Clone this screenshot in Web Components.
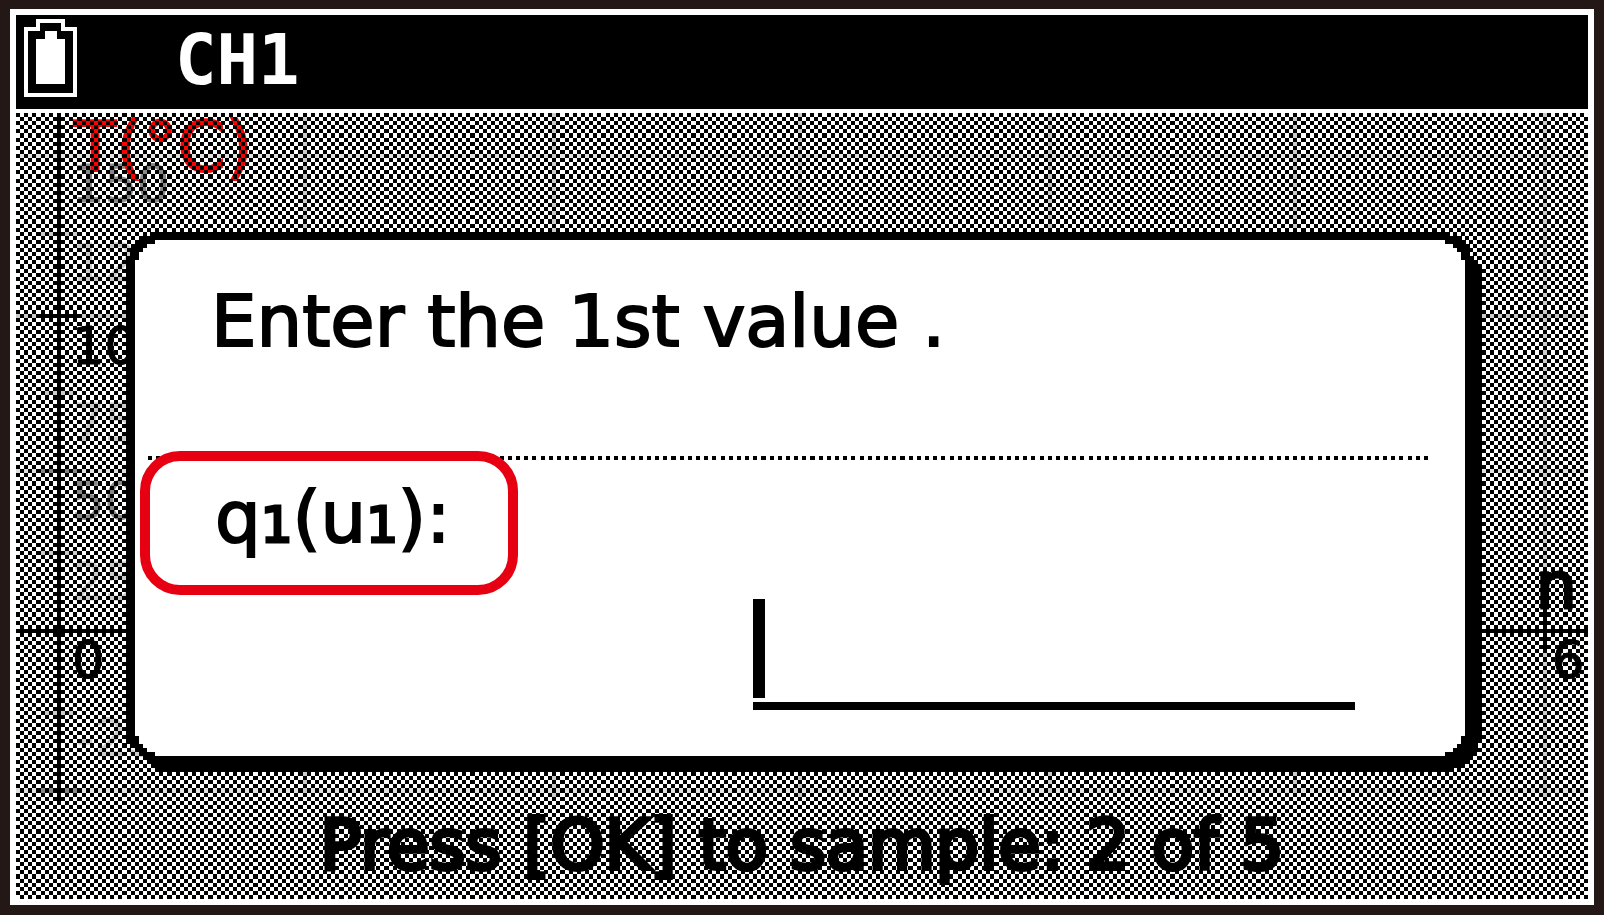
<!DOCTYPE html>
<html lang="en">
<head>
<meta charset="utf-8">
<meta name="viewport" content="width=device-width, initial-scale=1">
<title>CH1</title>
<style>
  html { background: #231815; }
  body { margin: 0; font-family: "DejaVu Sans", sans-serif; color: #000; }
</style>
</head>
<body>
<lcd-screen>
  <status-bar slot="status">CH1</status-bar>
  <graph-view slot="view">
    <axis-label slot="labels" style="--x:56px;--y:46px" tone="mid">150</axis-label>
    <axis-label slot="labels" style="--x:56px;--y:125px" tone="light">125</axis-label>
    <axis-label slot="labels" style="--x:56px;--y:208px" tone="dark">100</axis-label>
    <axis-label slot="labels" style="--x:56px;--y:285px" tone="light">75</axis-label>
    <axis-label slot="labels" style="--x:56px;--y:363px" tone="mid">50</axis-label>
    <axis-label slot="labels" style="--x:56px;--y:444px" tone="light">25</axis-label>
    <axis-label slot="labels" style="--x:56px;--y:522px" tone="dark">0</axis-label>
    <axis-label slot="labels" style="--x:60px;--y:600px" tone="light">-25</axis-label>
    <axis-label slot="labels" style="--x:58px;--y:0px" tone="red">T(°C)</axis-label>
    <axis-label slot="labels" style="--x:1520px;--y:441px" tone="name">n</axis-label>
    <axis-label slot="labels" style="--x:1536px;--y:522px" tone="dark">6</axis-label>
    <span slot="hint">Press [OK] to sample: 2 of 5</span>
    <value-dialog slot="dialog">
      <span slot="message">Enter the 1st value .</span>
    </value-dialog>
  </graph-view>
</lcd-screen>

<script>
const shadow = (host, html) => { host.attachShadow({ mode: "open" }).innerHTML = html; };

customElements.define("lcd-screen", class extends HTMLElement {
  constructor() {
    super();
    shadow(this, `
      <style>
        :host { display: flex; box-sizing: border-box; min-height: 100vh; padding: 9px 10px 10px; background: #231815; }
        main { flex: 1; display: flex; flex-direction: column; gap: 4px; min-width: 0; padding: 6px; background: #fff; }
        ::slotted([slot=view]) { flex: 1; }
      </style>
      <main><slot name="status"></slot><slot name="view"></slot></main>`);
  }
});

customElements.define("status-bar", class extends HTMLElement {
  constructor() {
    super();
    shadow(this, `
      <style>
        :host { display: block; background: #000; color: #fff; }
        header { display: flex; align-items: flex-start; gap: 98px; height: 94px; padding-left: 8px; }
        svg { margin-top: 4px; width: 53px; height: 78px; flex: none; }
        h1 { margin: 0; font: bold 69px/90px "DejaVu Sans Mono", monospace; }
      </style>
      <header>
        <svg viewBox="0 0 53 78" shape-rendering="crispEdges" role="img" aria-label="Battery full">
          <path fill="#fff" fill-rule="evenodd" d="M0 8H12V0H41V8H53V78H0ZM4 12V74H49V12H37V4H16V12Z"/>
          <path fill="#fff" d="M12 20H21V12H33V20H41V65H12Z"/>
        </svg>
        <h1><slot></slot></h1>
      </header>`);
  }
});

customElements.define("axis-label", class extends HTMLElement {
  constructor() {
    super();
    shadow(this, `
      <style>
        :host { display: block; position: absolute; left: var(--x); top: var(--y); font-size: 51px; line-height: 52px; color: #000; white-space: nowrap; -webkit-text-stroke: 1px currentColor; }
        :host([tone=mid]) { color: #888; }
        :host([tone=light]) { color: #ccc; }
        :host([tone=red]) { font-size: 69px; line-height: 69px; color: #f00; -webkit-text-stroke: 2px currentColor; }
        :host([tone=name]) { font-size: 64px; line-height: 64px; -webkit-text-stroke: 3px currentColor; }
      </style><slot></slot>`);
  }
});

customElements.define("graph-view", class extends HTMLElement {
  constructor() {
    super();
    const cols = 384, rows = 192;
    let dots = "";
    for (let y = 0; y < rows; y++)
      for (let x = y % 2; x < cols; x += 2) dots += `M${x} ${y}h1v1h-1z`;
    const rect = (x, y, w, h, c) => `<rect x="${x}" y="${y}" width="${w}" height="${h}" fill="${c}"/>`;
    let plot = "";
    for (const y of [10, 87, 165]) plot += rect(0, y, cols, 1, "#e2e2e2");
    for (const y of [87, 165]) plot += rect(5, y, 11, 1, "#888");
    plot += rect(0, 49, cols, 1, "#ccc") + rect(5, 49, 11, 1, "#000");
    for (const y of [29, 68, 107, 146]) plot += rect(6, y, 9, 1, "#ccc");
    for (const x of [70, 131, 191, 252, 312, 373]) plot += rect(x, 0, 1, 167, "#ccc");
    plot += rect(10, 0, 1, 169, "#000") + rect(0, 126, cols, 1, "#000") + rect(9, 125, 3, 3, "#000") + rect(373, 121, 1, 10, "#000");
    shadow(this, `
      <style>
        :host { display: grid; grid-template: minmax(0, 1fr) / minmax(0, 1fr); position: relative; overflow: hidden; background: #fff; }
        :host > * { grid-area: 1 / 1; }
        svg { position: absolute; inset: 0; width: 100%; height: 100%; }
        p { margin: 0; align-self: end; text-align: center; font-size: 69px; line-height: 80px; padding-bottom: 14px; z-index: 0; white-space: nowrap; -webkit-text-stroke: 4px #000; }
        .dots { z-index: 1; }
        .dialog { z-index: 2; display: grid; padding: 119px 106px 127px 110px; }
      </style>
      <svg viewBox="0 0 ${cols} ${rows}" preserveAspectRatio="none" shape-rendering="crispEdges" aria-hidden="true">${plot}</svg>
      <slot name="labels"></slot>
      <p><slot name="hint"></slot></p>
      <svg class="dots" viewBox="0 0 ${cols} ${rows}" preserveAspectRatio="none" shape-rendering="crispEdges" aria-hidden="true"><path d="${dots}"/></svg>
      <div class="dialog"><slot name="dialog"></slot></div>`);
  }
});

customElements.define("value-dialog", class extends HTMLElement {
  constructor() {
    super();
    shadow(this, `
      <style>
        :host {
          display: grid; padding: 8px 17px 16px 9px; background: #000;
          clip-path: polygon(
            0 24px, 4px 24px, 4px 16px, 8px 16px, 8px 12px, 12px 12px, 12px 8px, 16px 8px, 16px 4px, 24px 4px, 24px 0,
            calc(100% - 32px) 0, calc(100% - 32px) 4px, calc(100% - 20px) 4px, calc(100% - 20px) 8px, calc(100% - 16px) 8px, calc(100% - 16px) 12px, calc(100% - 12px) 12px, calc(100% - 12px) 24px, calc(100% - 8px) 24px, calc(100% - 8px) 28px, calc(100% - 4px) 28px, calc(100% - 4px) 36px, 100% 36px,
            100% calc(100% - 32px), calc(100% - 4px) calc(100% - 32px), calc(100% - 4px) calc(100% - 20px), calc(100% - 8px) calc(100% - 20px), calc(100% - 8px) calc(100% - 16px), calc(100% - 12px) calc(100% - 16px), calc(100% - 12px) calc(100% - 8px), calc(100% - 20px) calc(100% - 8px), calc(100% - 20px) calc(100% - 4px), calc(100% - 28px) calc(100% - 4px), calc(100% - 28px) 100%,
            32px 100%, 32px calc(100% - 4px), 28px calc(100% - 4px), 28px calc(100% - 8px), 24px calc(100% - 8px), 24px calc(100% - 12px), 20px calc(100% - 12px), 20px calc(100% - 16px), 16px calc(100% - 16px), 16px calc(100% - 20px), 12px calc(100% - 20px), 12px calc(100% - 24px), 4px calc(100% - 24px), 4px calc(100% - 28px), 0 calc(100% - 28px));
        }
        form {
          display: flex; flex-direction: column; align-items: flex-start; padding-top: 45px; background: #fff; font-size: 72px;
          clip-path: polygon(
            0 20px, 4px 20px, 4px 12px, 8px 12px, 8px 8px, 12px 8px, 12px 4px, 20px 4px, 20px 0,
            calc(100% - 20px) 0, calc(100% - 20px) 4px, calc(100% - 12px) 4px, calc(100% - 12px) 8px, calc(100% - 8px) 8px, calc(100% - 8px) 12px, calc(100% - 4px) 12px, calc(100% - 4px) 20px, 100% 20px,
            100% calc(100% - 20px), calc(100% - 4px) calc(100% - 20px), calc(100% - 4px) calc(100% - 12px), calc(100% - 8px) calc(100% - 12px), calc(100% - 8px) calc(100% - 8px), calc(100% - 12px) calc(100% - 8px), calc(100% - 12px) calc(100% - 4px), calc(100% - 20px) calc(100% - 4px), calc(100% - 20px) 100%,
            20px 100%, 20px calc(100% - 4px), 12px calc(100% - 4px), 12px calc(100% - 8px), 8px calc(100% - 8px), 8px calc(100% - 12px), 4px calc(100% - 12px), 4px calc(100% - 20px), 0 calc(100% - 20px));
        }
        p { margin: 0 0 99px 76px; line-height: 72px; white-space: nowrap; -webkit-text-stroke: 2px #000; }
        svg { height: 4px; margin: 0 37px 0 13px; width: calc(100% - 50px); }
        label { box-sizing: border-box; width: 378px; height: 144px; margin: -9px 0 4px 5px; padding-left: 65px; border: 10px solid #e60012; border-radius: 40px; line-height: 112px; white-space: nowrap; position: relative; background: #fff; -webkit-text-stroke: 2px #000; }
        small { font-size: 50px; line-height: 50px; -webkit-text-stroke: 3px #000; }
        input { box-sizing: border-box; align-self: flex-end; width: calc(50% - 63px); height: 111px; margin-right: 110px; padding: 0 0 0 16px; border: 0; border-bottom: 8px solid #000; border-radius: 0; outline: 0; font: inherit; background: linear-gradient(#000, #000) 0 0 / 12px 99px no-repeat; caret-color: transparent; }
      </style>
      <form>
        <p><slot name="message"></slot></p>
        <svg viewBox="0 0 313 1" preserveAspectRatio="none" shape-rendering="crispEdges" aria-hidden="true"><path stroke="#000" stroke-dasharray="1 1" d="M0 .5H313"/></svg>
        <label for="value">q<small>1</small>(u<small>1</small>):</label>
        <input id="value" type="text" inputmode="decimal" autocomplete="off">
      </form>`);
  }
});
</script>
</body>
</html>
